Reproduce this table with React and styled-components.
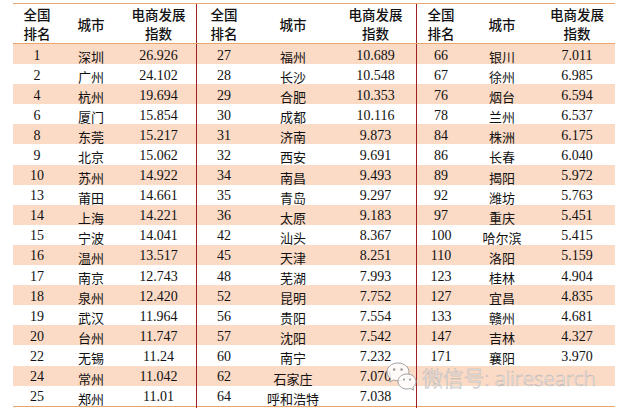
import React from 'react';
import styled, { createGlobalStyle } from 'styled-components';

const GlobalStyle = createGlobalStyle`
  html, body {
    margin: 0;
    padding: 0;
    background: #fff;
  }
  body {
    font-family: "Liberation Serif", "Noto Sans CJK SC", serif;
    color: #111;
  }
`;

const left = [
  ['1', '深圳', '26.926'], ['2', '广州', '24.102'], ['4', '杭州', '19.694'],
  ['6', '厦门', '15.854'], ['8', '东莞', '15.217'], ['9', '北京', '15.062'],
  ['10', '苏州', '14.922'], ['13', '莆田', '14.661'], ['14', '上海', '14.221'],
  ['15', '宁波', '14.041'], ['16', '温州', '13.517'], ['17', '南京', '12.743'],
  ['18', '泉州', '12.420'], ['19', '武汉', '11.964'], ['20', '台州', '11.747'],
  ['22', '无锡', '11.24'], ['24', '常州', '11.042'], ['25', '郑州', '11.01'],
];

const middle = [
  ['27', '福州', '10.689'], ['28', '长沙', '10.548'], ['29', '合肥', '10.353'],
  ['30', '成都', '10.116'], ['31', '济南', '9.873'], ['32', '西安', '9.691'],
  ['34', '南昌', '9.493'], ['35', '青岛', '9.297'], ['36', '太原', '9.183'],
  ['42', '汕头', '8.367'], ['45', '天津', '8.251'], ['48', '芜湖', '7.993'],
  ['52', '昆明', '7.752'], ['56', '贵阳', '7.554'], ['57', '沈阳', '7.542'],
  ['60', '南宁', '7.232'], ['62', '石家庄', '7.070'], ['64', '呼和浩特', '7.038'],
];

const right = [
  ['66', '银川', '7.011'], ['67', '徐州', '6.985'], ['76', '烟台', '6.594'],
  ['78', '兰州', '6.537'], ['84', '株洲', '6.175'], ['86', '长春', '6.040'],
  ['89', '揭阳', '5.972'], ['92', '潍坊', '5.763'], ['97', '重庆', '5.451'],
  ['100', '哈尔滨', '5.415'], ['110', '洛阳', '5.159'], ['123', '桂林', '4.904'],
  ['127', '宜昌', '4.835'], ['133', '赣州', '4.681'], ['147', '吉林', '4.327'],
  ['171', '襄阳', '3.970'],
];

const COLS = '48px 60px 76px 54px 84px 82px 48px 74px 76px';

const Wrap = styled.div`
  position: relative;
  width: 619px;
  height: 408px;
  padding: 3px 0 0 13px;
  box-sizing: border-box;
  overflow: hidden;
`;

const Table = styled.div`
  width: 602px;
  border-top: 1px solid #e9a66c;
  border-bottom: 1px solid #e9a66c;
`;

const Row = styled.div`
  display: grid;
  grid-template-columns: ${COLS};
  height: ${(p) => (p.$head ? '39px' : '20.1px')};
  background: ${(p) => (p.$shade ? '#fbdac6' : '#fff')};
  border-bottom: ${(p) => (p.$head ? '1px solid #e9a66c' : 'none')};
`;

const Cell = styled.div`
  display: flex;
  align-items: center;
  justify-content: center;
  text-align: center;
  box-sizing: border-box;
  font-size: 14px;
  line-height: 20px;
  white-space: nowrap;
  border-right: ${(p) => (p.$divide ? '1px solid #9e1f22' : 'none')};
`;

const HeadCell = styled(Cell)`
  font-family: "Noto Sans CJK SC", sans-serif;
  font-weight: 500;
  font-size: 13.5px;
  line-height: 19px;
  padding-top: 1px;
`;

const City = styled(Cell)`
  font-family: "Noto Sans CJK SC", sans-serif;
  font-size: 13px;
  padding-top: 3px;
  justify-content: ${(p) => (p.$start ? 'flex-start' : 'center')};
  padding-left: ${(p) => (p.$start ? '16px' : '0')};
`;

const Watermark = styled.div`
  position: absolute;
  left: 385px;
  top: 360px;
  display: flex;
  align-items: center;
  gap: 3px;
`;

const MarkText = styled.span`
  font-family: "Open Sans", "Noto Sans CJK SC", sans-serif;
  font-weight: 300;
  font-size: 21px;
  letter-spacing: -0.2px;
  color: rgba(255, 255, 255, 0.95);
  -webkit-text-stroke: 0.5px rgba(150, 150, 150, 0.7);
`;

function WeChatIcon() {
  return (
    <svg width="34" height="34" viewBox="0 0 34 34">
      <g fill="rgba(255,255,255,0.85)" stroke="#a0a0a0" strokeWidth="1">
        <path d="M13 3 C6.5 3 2 7.2 2 12 C2 14.8 3.5 17.1 5.8 18.7 L4.8 22 L8.7 20 C10 20.5 11.4 20.8 13 20.8 C19.4 20.8 24 16.7 24 12 C24 7.2 19.4 3 13 3 Z" />
        <path d="M22 14 C16.8 14 13 17.4 13 21.5 C13 25.6 16.8 29 22 29 C23.2 29 24.3 28.8 25.3 28.4 L28.6 30.2 L27.8 27.3 C29.8 26 31 23.9 31 21.5 C31 17.4 27.2 14 22 14 Z" />
      </g>
      <g fill="#a0a0a0">
        <circle cx="9.2" cy="9.6" r="1.3" />
        <circle cx="16.6" cy="9.6" r="1.3" />
        <circle cx="19" cy="19.6" r="1.1" />
        <circle cx="25" cy="19.6" r="1.1" />
      </g>
    </svg>
  );
}

function Group({ item, startCity, last }) {
  if (!item) {
    return (
      <>
        <Cell />
        <City />
        <Cell $divide={!last} />
      </>
    );
  }
  return (
    <>
      <Cell>{item[0]}</Cell>
      <City $start={startCity}>{item[1]}</City>
      <Cell $divide={!last}>{item[2]}</Cell>
    </>
  );
}

function HeadGroup({ last }) {
  return (
    <>
      <HeadCell>全国<br />排名</HeadCell>
      <HeadCell>城市</HeadCell>
      <HeadCell $divide={!last}>电商发展<br />指数</HeadCell>
    </>
  );
}

export default function App() {
  return (
    <>
      <GlobalStyle />
      <Wrap>
        <Table>
          <Row $head>
            <HeadGroup />
            <HeadGroup />
            <HeadGroup last />
          </Row>
          {left.map((item, i) => (
            <Row key={i} $shade={i % 2 === 0}>
              <Group item={item} />
              <Group item={middle[i]} />
              <Group item={right[i]} last />
            </Row>
          ))}
        </Table>
        <Watermark>
          <WeChatIcon />
          <MarkText>微信号: aliresearch</MarkText>
        </Watermark>
      </Wrap>
    </>
  );
}
